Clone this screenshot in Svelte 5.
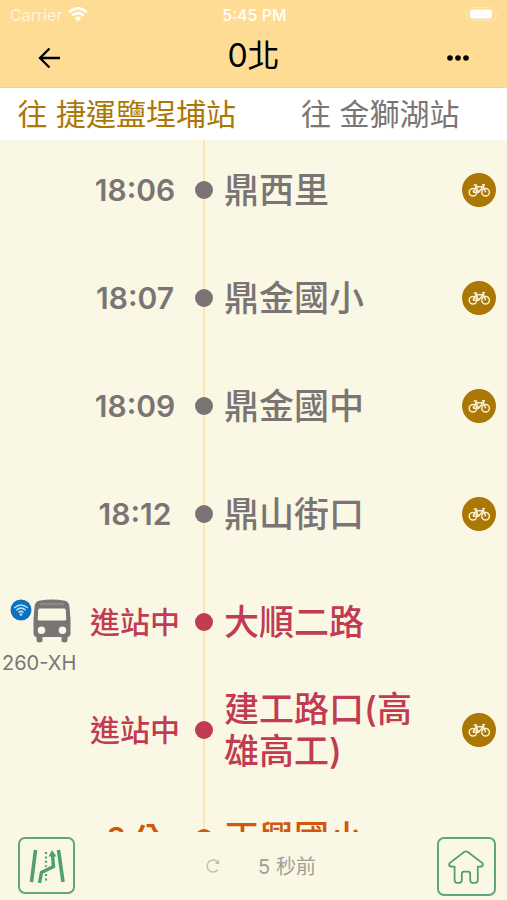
<script>
	const tabs = [
		{ id: 0, label: '往 捷運鹽埕埔站' },
		{ id: 1, label: '往 金獅湖站' }
	];

	const stops = [
		{ name: '鼎西里', time: '18:06', status: 'scheduled', bike: true },
		{ name: '鼎金國小', time: '18:07', status: 'scheduled', bike: true },
		{ name: '鼎金國中', time: '18:09', status: 'scheduled', bike: true },
		{ name: '鼎山街口', time: '18:12', status: 'scheduled', bike: true },
		{ name: '大順二路', time: '進站中', status: 'arriving', bike: false, bus: '260-XH' },
		{ name: '建工路口(高雄高工)', time: '進站中', status: 'arriving', bike: true },
		{ name: '正興國小', time: '3 分', status: 'soon', bike: false }
	];

	let activeTab = $state(0);
</script>

<div class="page">
	<header>
		<div class="status-bar">
			<div class="carrier">
				<span>Carrier</span>
				<svg width="20" height="15" viewBox="0 0 20 15" fill="none" stroke="#fff" stroke-width="2.6">
					<path d="M1 5.2 Q10 -2.6 19 5.2" />
					<path d="M4.2 8.6 Q10 3.6 15.8 8.6" />
					<path d="M6.8 11 Q10 8.2 13.2 11 L10 14.4 Z" fill="#fff" stroke="none" />
				</svg>
			</div>
			<span class="clock">5:45 PM</span>
			<svg class="battery" width="33" height="15" viewBox="0 0 33 15">
				<rect x="0.5" y="0.5" width="29" height="13" rx="4" fill="none" stroke="#ffe5b0" />
				<rect x="4" y="2.5" width="22" height="9" rx="2" fill="#fff" />
				<path d="M31.5 5 v4" stroke="#ffe5b0" stroke-width="1.5" />
			</svg>
		</div>
		<div class="nav-bar">
			<button class="nav-btn" aria-label="返回">
				<svg width="24" height="24" viewBox="0 0 24 24" fill="none" stroke="#000" stroke-width="2.3">
					<path d="M23 12 H3 M12.5 2.5 L3 12 L12.5 21.5" />
				</svg>
			</button>
			<h1>0北</h1>
			<button class="nav-btn" aria-label="更多">
				<svg width="24" height="24" viewBox="0 0 24 24">
					<circle cx="4" cy="12" r="2.8" />
					<circle cx="12" cy="12" r="2.8" />
					<circle cx="20" cy="12" r="2.8" />
				</svg>
			</button>
		</div>
	</header>

	<nav class="tabs">
		{#each tabs as tab (tab.id)}
			<button class="tab" class:active={activeTab === tab.id} onclick={() => (activeTab = tab.id)}>
				{tab.label}
			</button>
		{/each}
	</nav>

	<main>
		<ul class="stops">
			{#each stops as stop (stop.name)}
				<li class="stop {stop.status}">
					<div class="bus">
						{#if stop.bus}
							<div class="bus-icons">
								<svg width="22" height="22" viewBox="0 0 22 22">
									<circle cx="11" cy="11" r="10.5" fill="#0b70bd" />
									<g fill="none" stroke="#b9daef" stroke-width="1.5">
										<path d="M4.2 9 Q11 3 17.8 9" />
										<path d="M6.3 11.3 Q11 7 15.7 11.3" />
										<path d="M8.4 13.5 Q11 11.2 13.6 13.5" />
									</g>
									<circle cx="11" cy="15.6" r="1.4" fill="#b9daef" />
								</svg>
								<svg width="38" height="44" viewBox="0 0 38 44" fill="#7a7574">
									<path
										fill-rule="evenodd"
										d="M6 1.8 Q19 -0.8 32 1.8 Q36 2.8 36.5 8 L37.5 20 V34 Q37.5 38 34.5 38 V41 Q34.5 43.5 31.5 43.5 Q28.5 43.5 28.5 41 V38 H9.5 V41 Q9.5 43.5 6.5 43.5 Q3.5 43.5 3.5 41 V38 Q0.5 38 0.5 34 V20 L1.5 8 Q2 2.8 6 1.8 Z M6.5 9.5 Q5.4 9.5 5.2 11 L4.8 20 Q4.8 21.5 6.5 21.5 H31.5 Q33.2 21.5 33.2 20 L32.8 11 Q32.6 9.5 31.5 9.5 Z M8.5 27.5 A3.8 3.8 0 1 0 8.5 35.1 A3.8 3.8 0 1 0 8.5 27.5 Z M29.5 27.5 A3.8 3.8 0 1 0 29.5 35.1 A3.8 3.8 0 1 0 29.5 27.5 Z"
									/>
									<path d="M7 5 H31" stroke="#a5a19b" stroke-width="1" />
								</svg>
							</div>
							<span class="plate">{stop.bus}</span>
						{/if}
					</div>
					<div class="time">{stop.time}</div>
					<div class="track"><span class="dot"></span></div>
					<div class="name">{stop.name}</div>
					<div class="extra">
						{#if stop.bike}
							<svg width="34" height="34" viewBox="0 0 34 34">
								<circle cx="17" cy="17" r="17" fill="#ab7705" />
								<g fill="none" stroke="#f8eed2" stroke-width="1.5" stroke-linejoin="round">
									<circle cx="11" cy="19.2" r="3.8" />
									<circle cx="23.6" cy="19.2" r="3.8" />
									<path d="M11 19.2 L14 13.8 H21.2 L16.5 19.2 H11 M16.5 19.2 L13.5 12.2 M11.6 12 H15.2 M23.6 19.2 L20.8 11.8 H23" />
								</g>
							</svg>
						{/if}
					</div>
				</li>
			{/each}
		</ul>
	</main>

	<footer>
		<button class="tool" aria-label="路線圖">
			<svg width="38" height="36" viewBox="0 0 38 36" fill="none" stroke="#4f9f72">
				<path d="M7.5 2 L3.5 34 M30.5 2 L35 34" stroke-width="3.6" />
				<path d="M18 4 V34" stroke-width="2.2" stroke-dasharray="2 2.4" />
				<path d="M11.5 35 L13.5 24.5 L25.5 18.5 L24.5 7" stroke="#faf8e4" stroke-width="6" />
				<path d="M11.5 35 L13.5 24.5 L25.5 18.5 L24.5 7" stroke-width="3.4" />
				<path d="M24 2 L28.5 8.5 H20.5 Z" fill="#4f9f72" stroke="none" />
			</svg>
		</button>
		<div class="updated">
			<svg width="16" height="16" viewBox="0 0 16 16" fill="none" stroke="#c0beb1" stroke-width="1.4">
				<path d="M12.6 4 A6 6 0 1 0 12.8 11.8" />
				<path d="M14.2 1.5 V6 H9.8 Z" fill="#c0beb1" stroke="none" />
			</svg>
			<span>5 秒前</span>
		</div>
		<button class="tool home" aria-label="首頁">
			<svg width="36" height="34" viewBox="0 0 36 34" fill="none" stroke="#4f9f72" stroke-width="1.8" stroke-linejoin="round">
				<path
					d="M16.5 1.8 Q18 0.8 19.5 1.8 L33.8 12.6 Q35.6 14.4 34.4 16 Q33.6 16.8 29.8 16.6 V30 Q29.8 32.8 27.2 32.8 H24.8 Q22.2 32.8 22.2 30 V24 Q22.2 21.6 20 21.6 H16 Q13.8 21.6 13.8 24 V30 Q13.8 32.8 11.2 32.8 H9.2 Q6.6 32.8 6.6 30 V16.6 Q2.4 16.8 1.6 16 Q0.4 14.4 2.2 12.6 Z"
				/>
			</svg>
		</button>
	</footer>
</div>

<style>
	:global(body) {
		margin: 0;
	}

	.page {
		display: flex;
		flex-direction: column;
		height: 100vh;
		background: #faf8e4;
		color: #7a7574;
		font-family: Inter, 'Noto Sans CJK TC', sans-serif;
	}

	button {
		padding: 0;
		border: none;
		background: none;
		font-family: inherit;
		cursor: pointer;
	}

	svg {
		display: block;
		flex-shrink: 0;
	}

	header {
		background: #ffdc94;
		border-bottom: 1px solid #e6d3a8;
	}

	.status-bar {
		display: grid;
		grid-template-columns: 1fr auto 1fr;
		align-items: center;
		height: 29px;
		padding: 0 8px 0 10px;
		color: #fff;
		font-size: 16px;
	}

	.carrier {
		display: flex;
		align-items: center;
		gap: 6px;
		color: #fff4dc;
	}

	.clock {
		font-weight: 500;
	}

	.battery {
		justify-self: end;
	}

	.nav-bar {
		display: flex;
		align-items: center;
		justify-content: space-between;
		height: 58px;
		padding: 0 37px;
	}

	.nav-btn {
		height: 24px;
	}

	h1 {
		margin: 0;
		padding-bottom: 4px;
		color: #000;
		font-size: 32px;
		font-weight: 400;
		line-height: 50px;
	}

	.tabs {
		display: flex;
		height: 52px;
		background: #fff;
	}

	.tab {
		flex: 1;
		color: #7a7574;
		font-size: 30px;
		font-weight: 400;
		line-height: 48px;
		white-space: nowrap;
	}

	.tab.active {
		color: #ab7705;
	}

	main {
		flex: 1;
		min-height: 0;
		overflow: hidden;
	}

	.stops {
		list-style: none;
		margin: -4px 0 0;
		padding: 0;
	}

	.stop {
		display: grid;
		grid-template-columns: 80px 110px 28px 1fr 68px;
		align-items: center;
		height: 108px;
	}

	.bus {
		display: flex;
		flex-direction: column;
		gap: 8px;
		padding: 30px 0 0 2px;
	}

	.bus-icons {
		display: flex;
		gap: 1px;
		padding-left: 8px;
	}

	.plate {
		font-size: 20px;
		line-height: 24px;
		white-space: nowrap;
	}

	.time {
		font-size: 30px;
		font-weight: 600;
		text-align: center;
	}

	.track {
		display: flex;
		align-items: center;
		justify-content: center;
		align-self: stretch;
		background: linear-gradient(#ffe4ae, #ffe4ae) center / 2px 100% no-repeat;
	}

	.dot {
		width: 18px;
		height: 18px;
		border-radius: 50%;
		background: #7a7574;
	}

	.name {
		padding-left: 6px;
		font-size: 35px;
		font-weight: 500;
		line-height: 42px;
	}

	.extra {
		display: flex;
		justify-content: flex-end;
		padding-right: 11px;
	}

	.arriving .time,
	.arriving .name {
		color: #c13b52;
	}

	.arriving .time,
	.soon .time {
		padding-bottom: 5px;
	}

	.arriving .time {
		font-weight: 500;
	}

	.arriving .dot {
		background: #c13b52;
	}

	.soon .time,
	.soon .name {
		color: #d1570c;
	}

	.soon .dot {
		background: #d1570c;
	}

	footer {
		display: flex;
		align-items: flex-start;
		justify-content: space-between;
		height: 63px;
		padding: 5px 11px 0 18px;
	}

	.tool {
		display: flex;
		align-items: center;
		justify-content: center;
		box-sizing: border-box;
		width: 57px;
		height: 57px;
		border: 2px solid #5fa67e;
		border-radius: 7px;
	}

	.home {
		width: 59px;
		height: 59px;
	}

	.updated {
		display: flex;
		align-items: center;
		gap: 37px;
		height: 57px;
		padding-left: 9px;
		color: #a19e96;
		font-size: 20px;
	}
</style>
